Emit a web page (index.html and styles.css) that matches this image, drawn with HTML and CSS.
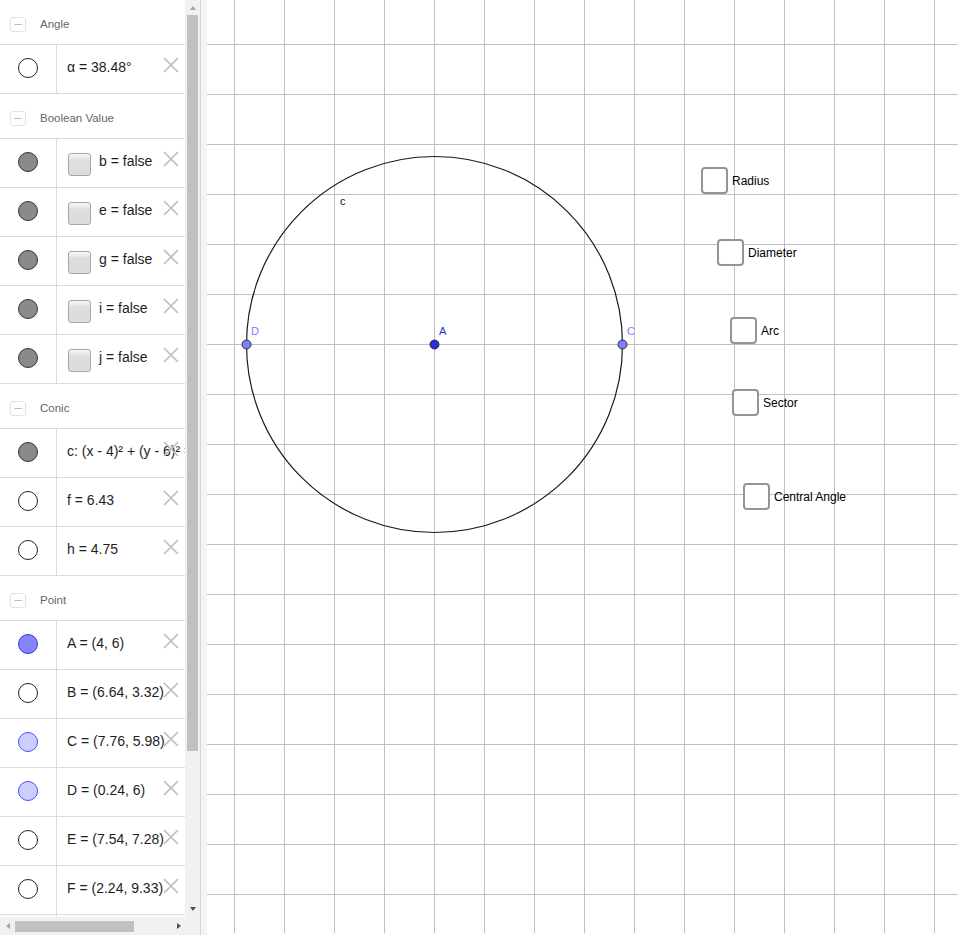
FILE: index.html
```html
<!DOCTYPE html>
<html>
<head>
<meta charset="utf-8">
<title>Circle</title>
<link rel="stylesheet" href="styles.css">
</head>
<body>
<div class="app">
  <aside class="sidebar">
    <div class="list">
      <div class="group"><span class="toggle"></span><span class="gname">Angle</span></div>
      <div class="item">
        <div class="mcell"><span class="marble m-empty"></span></div>
        <div class="tcell"><span class="val">α = 38.48°</span></div>
        <svg class="del" viewBox="0 0 16 16"><path d="M1 1L15 15M15 1L1 15"/></svg>
      </div>

      <div class="group"><span class="toggle"></span><span class="gname">Boolean Value</span></div>
      <div class="item">
        <div class="mcell"><span class="marble m-gray"></span></div>
        <div class="tcell"><span class="bool"></span><span class="val">b = false</span></div>
        <svg class="del" viewBox="0 0 16 16"><path d="M1 1L15 15M15 1L1 15"/></svg>
      </div>
      <div class="item">
        <div class="mcell"><span class="marble m-gray"></span></div>
        <div class="tcell"><span class="bool"></span><span class="val">e = false</span></div>
        <svg class="del" viewBox="0 0 16 16"><path d="M1 1L15 15M15 1L1 15"/></svg>
      </div>
      <div class="item">
        <div class="mcell"><span class="marble m-gray"></span></div>
        <div class="tcell"><span class="bool"></span><span class="val">g = false</span></div>
        <svg class="del" viewBox="0 0 16 16"><path d="M1 1L15 15M15 1L1 15"/></svg>
      </div>
      <div class="item">
        <div class="mcell"><span class="marble m-gray"></span></div>
        <div class="tcell"><span class="bool"></span><span class="val">i = false</span></div>
        <svg class="del" viewBox="0 0 16 16"><path d="M1 1L15 15M15 1L1 15"/></svg>
      </div>
      <div class="item">
        <div class="mcell"><span class="marble m-gray"></span></div>
        <div class="tcell"><span class="bool"></span><span class="val">j = false</span></div>
        <svg class="del" viewBox="0 0 16 16"><path d="M1 1L15 15M15 1L1 15"/></svg>
      </div>

      <div class="group"><span class="toggle"></span><span class="gname">Conic</span></div>
      <div class="item">
        <div class="mcell"><span class="marble m-gray"></span></div>
        <div class="tcell"><span class="val">c: (x - 4)² + (y - 6)² = 14.14</span></div>
        <svg class="del" viewBox="0 0 16 16"><path d="M1 1L15 15M15 1L1 15"/></svg>
      </div>
      <div class="item">
        <div class="mcell"><span class="marble m-empty"></span></div>
        <div class="tcell"><span class="val">f = 6.43</span></div>
        <svg class="del" viewBox="0 0 16 16"><path d="M1 1L15 15M15 1L1 15"/></svg>
      </div>
      <div class="item">
        <div class="mcell"><span class="marble m-empty"></span></div>
        <div class="tcell"><span class="val">h = 4.75</span></div>
        <svg class="del" viewBox="0 0 16 16"><path d="M1 1L15 15M15 1L1 15"/></svg>
      </div>

      <div class="group"><span class="toggle"></span><span class="gname">Point</span></div>
      <div class="item">
        <div class="mcell"><span class="marble m-blue"></span></div>
        <div class="tcell"><span class="val">A = (4, 6)</span></div>
        <svg class="del" viewBox="0 0 16 16"><path d="M1 1L15 15M15 1L1 15"/></svg>
      </div>
      <div class="item">
        <div class="mcell"><span class="marble m-empty"></span></div>
        <div class="tcell"><span class="val">B = (6.64, 3.32)</span></div>
        <svg class="del" viewBox="0 0 16 16"><path d="M1 1L15 15M15 1L1 15"/></svg>
      </div>
      <div class="item">
        <div class="mcell"><span class="marble m-light"></span></div>
        <div class="tcell"><span class="val">C = (7.76, 5.98)</span></div>
        <svg class="del" viewBox="0 0 16 16"><path d="M1 1L15 15M15 1L1 15"/></svg>
      </div>
      <div class="item">
        <div class="mcell"><span class="marble m-light"></span></div>
        <div class="tcell"><span class="val">D = (0.24, 6)</span></div>
        <svg class="del" viewBox="0 0 16 16"><path d="M1 1L15 15M15 1L1 15"/></svg>
      </div>
      <div class="item">
        <div class="mcell"><span class="marble m-empty"></span></div>
        <div class="tcell"><span class="val">E = (7.54, 7.28)</span></div>
        <svg class="del" viewBox="0 0 16 16"><path d="M1 1L15 15M15 1L1 15"/></svg>
      </div>
      <div class="item">
        <div class="mcell"><span class="marble m-empty"></span></div>
        <div class="tcell"><span class="val">F = (2.24, 9.33)</span></div>
        <svg class="del" viewBox="0 0 16 16"><path d="M1 1L15 15M15 1L1 15"/></svg>
      </div>
      <div class="item item-tail">
        <div class="mcell"></div>
        <div class="tcell"></div>
      </div>
    </div>

    <div class="vscroll">
      <span class="arr arr-up"></span>
      <span class="vthumb"></span>
      <span class="arr arr-down"></span>
    </div>
    <div class="hscroll">
      <span class="arr arr-left"></span>
      <span class="hthumb"></span>
      <span class="arr arr-right"></span>
    </div>
    <div class="corner"></div>
  </aside>

  <div class="splitter"></div>

  <main class="graphics">
    <svg class="canvas" width="753" height="935" viewBox="207 0 753 935">
      <path class="grid" d="M234.5 0V933M284.5 0V933M334.5 0V933M384.5 0V933M434.5 0V933M484.5 0V933M534.5 0V933M584.5 0V933M634.5 0V933M684.5 0V933M734.5 0V933M784.5 0V933M834.5 0V933M884.5 0V933M934.5 0V933M207 44.5H958M207 94.5H958M207 144.5H958M207 194.5H958M207 244.5H958M207 294.5H958M207 344.5H958M207 394.5H958M207 444.5H958M207 494.5H958M207 544.5H958M207 594.5H958M207 644.5H958M207 694.5H958M207 744.5H958M207 794.5H958M207 844.5H958M207 894.5H958"/>
      <circle class="conic" cx="434.5" cy="344.5" r="188"/>
      <text class="lbl lbl-c" x="340" y="205">c</text>
      <circle class="pt pt-path" cx="246.5" cy="344.5" r="4.5"/>
      <circle class="pt pt-free" cx="434.5" cy="344.5" r="4.5"/>
      <circle class="pt pt-path" cx="622.5" cy="344.5" r="4.5"/>
      <text class="lbl lbl-path" x="251" y="335">D</text>
      <text class="lbl lbl-free" x="439" y="335">A</text>
      <text class="lbl lbl-path" x="627" y="335">C</text>
    </svg>

    <label class="gcheck cb-radius"><span class="gbox"></span><span>Radius</span></label>
    <label class="gcheck cb-diameter"><span class="gbox"></span><span>Diameter</span></label>
    <label class="gcheck cb-arc"><span class="gbox"></span><span>Arc</span></label>
    <label class="gcheck cb-sector"><span class="gbox"></span><span>Sector</span></label>
    <label class="gcheck cb-central"><span class="gbox"></span><span>Central Angle</span></label>
  </main>
</div>
</body>
</html>
```

FILE: styles.css
```css
html, body {
  margin: 0;
  padding: 0;
  background: #fff;
}

body {
  width: 960px;
  height: 935px;
  overflow: hidden;
  font-family: "Liberation Sans", Arial, sans-serif;
}

.app {
  display: flex;
  width: 960px;
  height: 935px;
}

/* ---------- Algebra sidebar ---------- */
.sidebar {
  width: 200px;
  height: 935px;
  flex: none;
  display: grid;
  grid-template-columns: 185px 15px;
  grid-template-rows: 917px 18px;
  background: #fff;
}

.list {
  overflow: hidden;
  background: #fff;
}

.group {
  height: 45px;
  box-sizing: border-box;
  border-bottom: 1px solid #dcdcdc;
  display: flex;
  align-items: center;
  padding-top: 4px;
}

.toggle {
  position: relative;
  width: 16px;
  height: 15px;
  box-sizing: border-box;
  border: 1px solid #e2e2e2;
  border-radius: 3px;
  margin-left: 10px;
  margin-top: 1px;
}

.toggle::after {
  content: "";
  position: absolute;
  left: 3px;
  top: 6px;
  width: 8px;
  height: 1px;
  background: #bdbdbd;
}

.gname {
  margin-left: 14px;
  font-size: 11.5px;
  color: #666;
}

.item {
  position: relative;
  height: 49px;
  box-sizing: border-box;
  border-bottom: 1px solid #dcdcdc;
  display: flex;
  overflow: hidden;
}

.mcell {
  width: 57px;
  flex: none;
  box-sizing: border-box;
  border-right: 1px solid #dcdcdc;
  display: flex;
  align-items: center;
  justify-content: center;
  padding-bottom: 2px;
}

.marble {
  width: 20px;
  height: 20px;
  box-sizing: border-box;
  border-radius: 50%;
  border: 1px solid #222;
}

.m-empty { background: #fff; }
.m-gray { background: #8a8a8a; border-color: #333; }
.m-blue { background: #8484ff; border-color: #3a3ad8; }
.m-light { background: #cdcdff; border-color: #4d4dff; }

.tcell {
  flex: 1;
  display: flex;
  align-items: center;
  padding-left: 10px;
  padding-bottom: 4px;
  white-space: nowrap;
  overflow: hidden;
  font-size: 14px;
  color: #1e1e1e;
}

.bool {
  flex: none;
  width: 23px;
  height: 23px;
  box-sizing: border-box;
  border: 1px solid #a6a6a6;
  border-radius: 3px;
  background: linear-gradient(#f6f6f6 0, #ebebeb 18%, #dedede 30%, #dcdcdc 100%);
  margin-left: 1px;
  margin-right: 8px;
  margin-top: 6px;
}

.del {
  position: absolute;
  right: 6px;
  top: 12px;
  width: 16px;
  height: 16px;
  fill: none;
  stroke: #bcbcbc;
  stroke-width: 1.6;
}

/* scrollbars */
.vscroll {
  background: #f1f1f1;
  display: flex;
  flex-direction: column;
  align-items: center;
}

.arr {
  width: 0;
  height: 0;
  flex: none;
}

.arr-up {
  margin-top: 6px;
  border-left: 3.5px solid transparent;
  border-right: 3.5px solid transparent;
  border-bottom: 4px solid #a3a3a3;
}

.arr-down {
  margin-top: auto;
  margin-bottom: 6px;
  border-left: 3.5px solid transparent;
  border-right: 3.5px solid transparent;
  border-top: 4px solid #505050;
}

.vthumb {
  width: 11px;
  height: 736px;
  margin-top: 5px;
  background: #c1c1c1;
}

.hscroll {
  background: #f1f1f1;
  display: flex;
  align-items: center;
}

.arr-left {
  margin-left: 6px;
  border-top: 3.5px solid transparent;
  border-bottom: 3.5px solid transparent;
  border-right: 4px solid #a3a3a3;
}

.hthumb {
  width: 119px;
  height: 11px;
  margin-left: 5px;
  background: #c1c1c1;
}

.arr-right {
  margin-left: auto;
  margin-right: 4px;
  border-top: 3.5px solid transparent;
  border-bottom: 3.5px solid transparent;
  border-left: 4px solid #505050;
}

.corner {
  background: #f1f1f1;
}

.splitter {
  width: 7px;
  flex: none;
  box-sizing: border-box;
  border-left: 1px solid #d8d8d8;
  background: #f4f4f4;
}

/* ---------- Graphics view ---------- */
.graphics {
  position: relative;
  flex: 1;
  height: 935px;
  overflow: hidden;
  background: #fff;
}

.canvas {
  display: block;
}

.grid {
  fill: none;
  stroke: #c0c0c0;
  stroke-width: 1;
}

.conic {
  fill: none;
  stroke: #1a1a1a;
  stroke-width: 1.2;
}

.pt {
  stroke: #2b2b2b;
  stroke-width: 1;
}

.pt-path { fill: #7d7dff; }
.pt-free { fill: #2d2de0; }

.lbl {
  font-family: "Liberation Sans", Arial, sans-serif;
  font-size: 11px;
}

.lbl-c { fill: #111; }
.lbl-path { fill: #7d7dff; }
.lbl-free { fill: #2d2de0; }

.gcheck {
  position: absolute;
  display: flex;
  align-items: center;
  gap: 4px;
  font-family: "Liberation Sans", Arial, sans-serif;
  font-size: 12px;
  color: #000;
  white-space: nowrap;
}

.gbox {
  width: 27px;
  height: 27px;
  box-sizing: border-box;
  border: 2px solid #949494;
  border-radius: 4px;
  background: #fff;
}

.cb-radius { left: 494px; top: 167px; }
.cb-diameter { left: 510px; top: 239px; }
.cb-arc { left: 523px; top: 317px; }
.cb-sector { left: 525px; top: 389px; }
.cb-central { left: 536px; top: 483px; }
```
